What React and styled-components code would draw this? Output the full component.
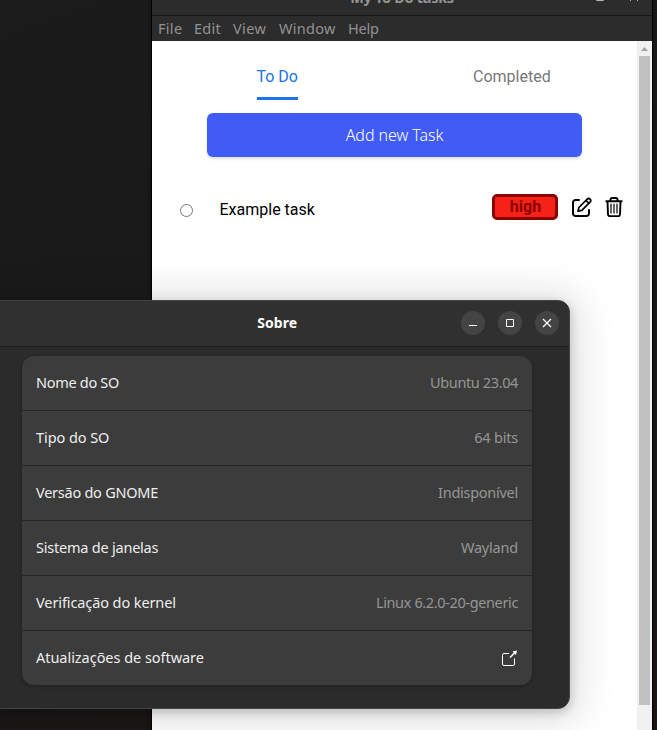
import React from 'react';
import styled, { createGlobalStyle } from 'styled-components';

const GlobalStyle = createGlobalStyle`
  * { box-sizing: border-box; }
  body { margin: 0; background: #1a1a1a; }
  button { font: inherit; border: 0; padding: 0; background: none; color: inherit; }
`;

const Desktop = styled.main`
  position: relative;
  width: 657px;
  height: 730px;
  overflow: hidden;
  background: linear-gradient(160deg, #1b1b1b 0%, #191919 55%, #1c1715 100%);
  font-family: 'Noto Sans', 'Open Sans', sans-serif;
`;

const TodoWindow = styled.section`
  position: absolute;
  left: 151px;
  top: -23px;
  width: 502px;
  height: 780px;
  display: flex;
  flex-direction: column;
  border: solid #030303;
  border-width: 0 1px;
  box-shadow: 0 0 4px rgba(0, 0, 0, 0.5);
`;

const TodoTitlebar = styled.header`
  display: grid;
  grid-template-columns: 1fr auto 1fr;
  align-items: center;
  height: 39px;
  padding-top: 1px;
  background: #2c2c2c;
  border-bottom: 1px solid #171717;
  color: #939393;
  font-size: 14.5px;
  font-weight: 700;
  line-height: 36px;
`;

const TodoTitle = styled.span`
  grid-column: 2;
  letter-spacing: -0.3px;
`;

const TodoControls = styled.div`
  display: flex;
  justify-content: flex-end;
  gap: 26px;
  padding: 0 14px 0 0;
`;

const MenuBar = styled.nav`
  display: flex;
  gap: 12px;
  height: 25px;
  padding-left: 6px;
  background: #2c2c2c;
  color: #929292;
  font-size: 14.5px;
  line-height: 25px;
`;

const MenuItem = styled.span`
  width: ${(p) => p.$width}px;
  white-space: nowrap;
  letter-spacing: ${(p) => p.$spacing || 0}px;
`;

const Viewport = styled.div`
  flex: 1;
  display: flex;
  background: #fff;
`;

const Page = styled.div`
  flex: 1;
  font-family: Roboto, sans-serif;
  font-size: 16px;
`;

const Scrollbar = styled.div`
  width: 15px;
  background: #f1f1f1;
  display: flex;
  flex-direction: column;
  align-items: center;
`;

const ScrollArrow = styled.svg`
  width: 15px;
  height: 15px;
  display: block;
`;

const ScrollThumb = styled.div`
  width: 11px;
  height: 649px;
  background: #c1c1c1;
`;

const Tabs = styled.div`
  display: flex;
  gap: 175px;
  padding: 17px 0 0 104.5px;
  height: 72px;
`;

const Tab = styled.button`
  height: 42px;
  display: flex;
  align-items: flex-start;
  padding-top: 9px;
  line-height: 19px;
  color: ${(p) => (p.$active ? '#1a73e8' : '#777')};
  border-bottom: 3px solid ${(p) => (p.$active ? '#1a73e8' : 'transparent')};
`;

const AddButton = styled.button`
  display: block;
  width: 375px;
  height: 44px;
  margin-left: 55px;
  border-radius: 6px;
  background: #405cf5;
  color: #fff;
  box-shadow: 0 2px 3px rgba(0, 0, 0, 0.12);
  font: 350 16px/44px 'Noto Sans', sans-serif;
  letter-spacing: -0.05px;
`;

const TaskRow = styled.div`
  display: flex;
  align-items: center;
  height: 30px;
  margin-top: 35px;
  padding: 0 11px 0 28px;
`;

const TaskRadio = styled.span`
  width: 13px;
  height: 13px;
  margin-top: 7px;
  border: 1px solid #767676;
  border-radius: 50%;
`;

const TaskName = styled.span`
  flex: 1;
  padding: 5px 0 0 26.5px;
  color: #000;
`;

const Priority = styled.span`
  width: 66px;
  height: 26px;
  border: 3px solid #8b0000;
  border-radius: 5px;
  background: #f62217;
  color: #8b0000;
  font-weight: 700;
  line-height: 19px;
  text-align: center;
  padding-left: 1px;
`;

const IconButton = styled.button`
  width: 24px;
  height: 24px;
  margin-left: ${(p) => p.$gap}px;
  color: #000;
  svg { display: block; }
`;

const AboutWindow = styled.section`
  position: absolute;
  left: -20px;
  top: 300px;
  width: 590px;
  height: 409px;
  border: 1px solid #444;
  border-radius: 12px;
  overflow: hidden;
  background: #2b2b2b;
`;

const AboutShadow = styled.div`
  position: absolute;
  left: -20px;
  top: 300px;
  width: 590px;
  height: 409px;
  border-radius: 12px;
  box-shadow: 0 3px 10px 1px rgba(0, 0, 0, 0.17), 0 3px 38px 8px rgba(0, 0, 0, 0.14);
`;

const AboutTitlebar = styled.header`
  display: grid;
  grid-template-columns: 1fr auto 98px;
  align-items: center;
  height: 46px;
  padding: 0 10px 2px 0;
  background: #303030;
  border-bottom: 1px solid #1f1f1f;
`;

const AboutTitle = styled.h1`
  margin: 0;
  padding-right: 164px;
  color: #fff;
  font-size: 14px;
  font-weight: 700;
  line-height: 43px;
`;

const WindowControls = styled.div`
  display: flex;
  gap: 13px;
`;

const RoundControl = styled.button`
  width: 24px;
  height: 24px;
  flex: none;
  border-radius: 50%;
  background: #444;
  color: #fff;
  svg { display: block; }
`;

const InfoList = styled.dl`
  width: 510px;
  margin: 9px 0 0 41px;
  border-radius: 12px;
  overflow: hidden;
  background: #3c3c3c;
  box-shadow: 0 1px 3px 1px rgba(0, 0, 0, 0.18);
`;

const InfoRow = styled.div`
  display: flex;
  justify-content: space-between;
  align-items: center;
  height: 55px;
  padding: 0 14px 2px;
  border-bottom: 1px solid #262626;
  font-size: 14.5px;
  &:last-child { height: 54px; border-bottom: 0; }
`;

const InfoLabel = styled.dt`
  color: #eee;
  letter-spacing: ${(p) => p.$spacing}px;
`;

const InfoValue = styled.dd`
  margin: 0;
  color: #969696;
  letter-spacing: ${(p) => p.$spacing || 0}px;
  svg { display: block; margin-top: 2px; }
`;

const menus = [
  { name: 'File', width: 24, spacing: 0.3 },
  { name: 'Edit', width: 27, spacing: 0.3 },
  { name: 'View', width: 34, spacing: 0.4 },
  { name: 'Window', width: 57, spacing: 0.3 },
  { name: 'Help', width: 32, spacing: -0.2 },
];

const ExternalIcon = () => (
  <svg width="17" height="17" viewBox="0 0 17 17" fill="none" stroke="#fff">
    <path d="M8 3.500H3A1.500 1.500 0 0 0 1.500 5v9A1.500 1.500 0 0 0 3 15.500h9a1.500 1.500 0 0 0 1.500-1.500V8.500" />
    <path d="M9 7.500 13.500 3" strokeWidth="1.600" />
    <path d="M11.500 1.500 16 .5 15 5z" fill="#fff" stroke="none" />
  </svg>
);

const rows = [
  { label: 'Nome do SO', value: 'Ubuntu 23.04', labelSpacing: -0.3, valueSpacing: -0.38 },
  { label: 'Tipo do SO', value: '64 bits', labelSpacing: -0.07, valueSpacing: -0.2 },
  { label: 'Versão do GNOME', value: 'Indisponível', labelSpacing: -0.25, valueSpacing: -0.27 },
  { label: 'Sistema de janelas', value: 'Wayland', labelSpacing: -0.22, valueSpacing: -0.2 },
  { label: 'Verificação do kernel', value: 'Linux 6.2.0-20-generic', labelSpacing: -0.1, valueSpacing: -0.37 },
  { label: 'Atualizações de software', value: <ExternalIcon />, labelSpacing: -0.04 },
];

const EditIcon = () => (
  <svg width="24" height="24" viewBox="0 0 24 24" fill="none" stroke="currentColor" strokeLinecap="round" strokeLinejoin="round">
    <path d="M9 5H5.500A2.500 2.500 0 0 0 3 7.500v11A2.500 2.500 0 0 0 5.500 21h11A2.500 2.500 0 0 0 19 18.500V15" strokeWidth="2" />
    <path d="M8 16.200l.9-3.700 8.300-8.300a2.050 2.050 0 0 1 2.900 2.900l-8.300 8.300zM16 5.500l2.900 2.900" strokeWidth="1.700" />
  </svg>
);

const TrashIcon = () => (
  <svg width="24" height="24" viewBox="0 0 24 24" fill="none" stroke="currentColor" strokeLinecap="round" strokeLinejoin="round">
    <path d="M4.300 6.200h15.400M8.500 6V4.600A1.600 1.600 0 0 1 10.100 3h3.800a1.600 1.600 0 0 1 1.600 1.600V6M5.500 6.500l.5 12.700a2 2 0 0 0 2 1.900h8a2 2 0 0 0 2-1.900l.5-12.700" strokeWidth="1.900" />
    <path d="M9 9v9M12 9v9M15 9v9" strokeWidth="1.200" />
  </svg>
);

export default function App() {
  return (
    <>
      <GlobalStyle />
      <Desktop>
        <TodoWindow>
          <TodoTitlebar>
            <TodoTitle>My To Do tasks</TodoTitle>
            <TodoControls>
              <svg width="8" height="8" stroke="#b5b5b5" fill="none"><path d="M.5.500h7v7h-7z" /></svg>
              <svg width="8" height="8" stroke="#b5b5b5" fill="none"><path d="M0 0l8 8M8 0L0 8" /></svg>
            </TodoControls>
          </TodoTitlebar>
          <MenuBar>
            {menus.map((m) => <MenuItem key={m.name} $width={m.width} $spacing={m.spacing}>{m.name}</MenuItem>)}
          </MenuBar>
          <Viewport>
            <Page>
              <Tabs>
                <Tab $active>To Do</Tab>
                <Tab>Completed</Tab>
              </Tabs>
              <AddButton>Add new Task</AddButton>
              <TaskRow>
                <TaskRadio />
                <TaskName>Example task</TaskName>
                <Priority>high</Priority>
                <IconButton $gap={12} aria-label="Edit"><EditIcon /></IconButton>
                <IconButton $gap={8} aria-label="Delete"><TrashIcon /></IconButton>
              </TaskRow>
            </Page>
            <Scrollbar>
              <ScrollArrow viewBox="0 0 15 15"><path d="M4 10h7L7.500 6z" fill="#a3a3a3" /></ScrollArrow>
              <ScrollThumb />
            </Scrollbar>
          </Viewport>
        </TodoWindow>
        <AboutShadow />
        <AboutWindow>
          <AboutTitlebar>
            <span />
            <AboutTitle>Sobre</AboutTitle>
            <WindowControls>
              <RoundControl aria-label="Minimize">
                <svg width="24" height="24" stroke="#fff"><path d="M8 14.500h8" /></svg>
              </RoundControl>
              <RoundControl aria-label="Maximize">
                <svg width="24" height="24" stroke="#fff" fill="none"><path d="M8.500 8.500h7v7h-7z" /></svg>
              </RoundControl>
              <RoundControl aria-label="Close">
                <svg width="24" height="24" stroke="#fff" strokeWidth="1.300"><path d="M8 8l8 8M16 8l-8 8" /></svg>
              </RoundControl>
            </WindowControls>
          </AboutTitlebar>
          <InfoList>
            {rows.map((r) => (
              <InfoRow key={r.label}>
                <InfoLabel $spacing={r.labelSpacing || 0}>{r.label}</InfoLabel>
                <InfoValue $spacing={r.valueSpacing}>{r.value}</InfoValue>
              </InfoRow>
            ))}
          </InfoList>
        </AboutWindow>
      </Desktop>
    </>
  );
}
